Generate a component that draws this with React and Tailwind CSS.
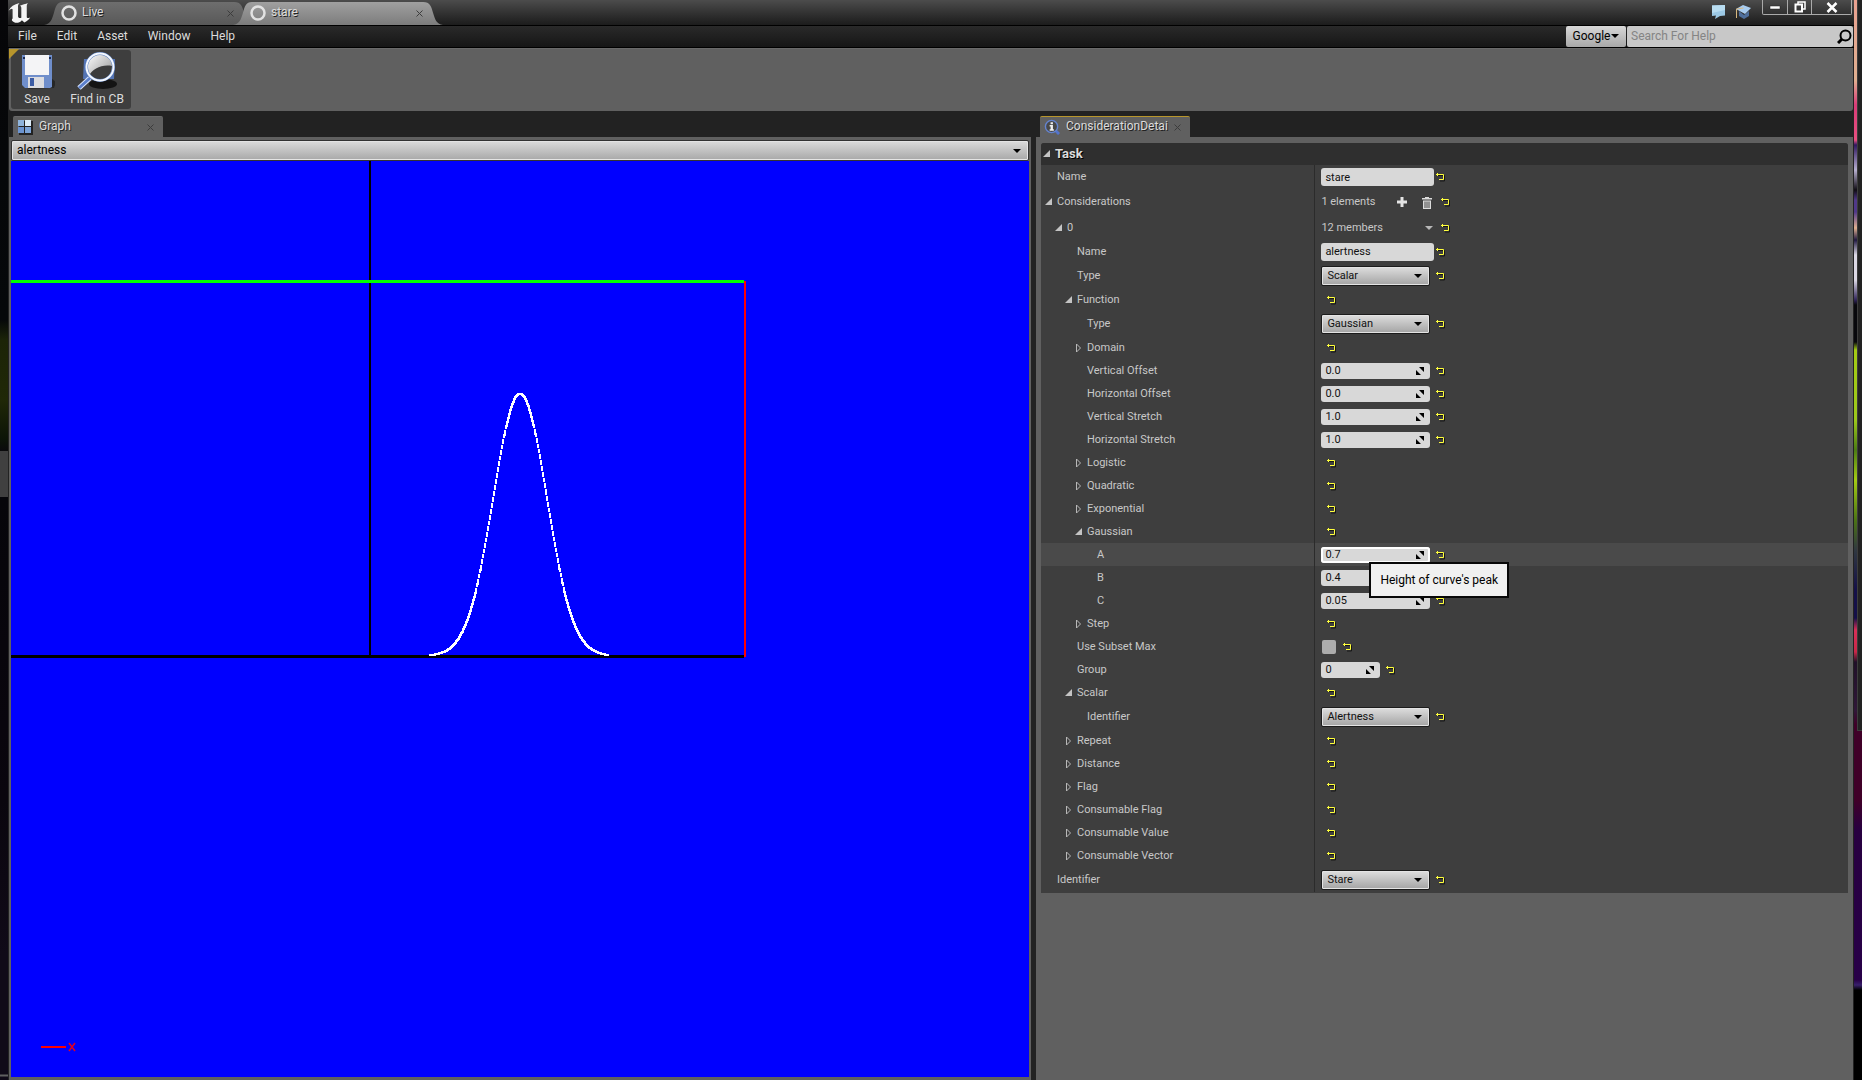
const GRAPH = { left: 359, base: 495, scale: 374, a: 0.7, b: 0.4, c: 0.05 };

function curveY(x) {
  const d = (x - GRAPH.left) / GRAPH.scale - GRAPH.b;
  return GRAPH.base - GRAPH.a * (GRAPH.scale + 1) * Math.exp(-(d * d) / (4 * GRAPH.c * GRAPH.c));
}

function curveSegments() {
  const out = [];
  for (let x = 418; x < 597; x += 1) {
    const y0 = Math.round(curveY(x));
    const y1 = Math.round(curveY(x + 1));
    const rise = Math.abs(y1 - y0);
    out.push({ x, y: Math.min(y0, y1) - 1, h: rise < 5 ? rise + 2 : rise - 1 });
  }
  return out;
}

function Graph() {
  return (
    <svg className="block w-full h-full" shapeRendering="crispEdges" role="img" aria-label="Response curve">
      <rect x="358" y="0" width="2" height="495" fill="#000" />
      <rect x="0" y="494" width="733" height="3" fill="#000" />
      <rect x="0" y="119" width="733" height="3" fill="#00ff00" />
      <rect x="733" y="120" width="2" height="376" fill="#f00" />
      {curveSegments().map((s) => (
        <rect key={s.x} x={s.x} y={s.y} width="2" height={s.h} fill="#fff" />
      ))}
      <rect x="30" y="885" width="25" height="2" fill="#f00" />
      <path d="M58 882l6 8M64 882l-6 8" stroke="#e00020" strokeWidth="1.5" shapeRendering="auto" />
    </svg>
  );
}

function Reset() {
  return (
    <button type="button" aria-label="Reset to default" className="shrink-0 w-3 h-3">
      <svg className="block" width="12" height="12" viewBox="0 0 12 12" fill="none">
        <path d="M3 4.500h6.500v5.500H5" stroke="#161616" />
        <path d="M1 3.500h7.500v5H4M2.500 2v3" stroke="#ffff3c" />
      </svg>
    </button>
  );
}

function Arrow({ open }) {
  return (
    <button type="button" aria-label={open ? "Collapse" : "Expand"} className="shrink-0 w-3 h-3">
      {open ? (
        <svg className="block" width="12" height="12" viewBox="0 0 12 12"><path d="M0 9h7V2z" fill="#c4c4c4" /></svg>
      ) : (
        <svg className="block" width="12" height="12" viewBox="0 0 12 12" fill="none"><path d="M1.500 2v8l4-4z" stroke="#b8b8b8" /></svg>
      )}
    </button>
  );
}

function Caret({ className }) {
  return (
    <svg className={className} width="8" height="4" viewBox="0 0 8 4"><path d="M0 0h8L4 4z" fill="currentColor" /></svg>
  );
}

function TextField({ label, value }) {
  return (
    <input type="text" aria-label={label} defaultValue={value} className="w-[113px] h-[18px] rounded-[3px] bg-[#d8d8d8] px-1 text-[11px] text-[#111] outline-none" />
  );
}

function Combo({ label, value }) {
  return (
    <span className="relative flex items-center">
      <select aria-label={label} className="appearance-none w-[109px] h-5 rounded-[2px] border border-[#1c1c1c] bg-linear-to-b from-[#dedede] to-[#a4a4a4] px-[5px] text-[11px] text-[#111] shadow-[inset_0_0_0_1px_#e4e4e4] outline-none">
        <option>{value}</option>
      </select>
      <Caret className="absolute right-2 pointer-events-none text-black" />
    </span>
  );
}

function NumberField({ label, value, small, focused }) {
  return (
    <span className="relative flex items-center">
      <input
        type="text"
        inputMode="decimal"
        aria-label={label}
        defaultValue={value}
        className={`${small ? "w-[59px]" : "w-[109px]"} ${focused ? "shadow-[inset_0_0_0_2px_#ffffff]" : ""} h-4 rounded-[3px] bg-[#d8d8d8] px-1 text-[11px] text-[#111] outline-none`}
      />
      <svg className="absolute right-[6px] pointer-events-none" width="8" height="8" viewBox="0 0 8 8"><path d="M3 0h5v5zM0 3v5h5z" fill="#000" /></svg>
    </span>
  );
}

const ROWS = [
  { label: "Name", depth: 0, h: "h-6", kind: "text", value: "stare" },
  { label: "Considerations", depth: 0, h: "h-[26px]", open: true, kind: "array", value: "1 elements" },
  { label: "0", depth: 1, h: "h-[25px]", open: true, kind: "members", value: "12 members" },
  { label: "Name", depth: 2, kind: "text", value: "alertness" },
  { label: "Type", depth: 2, h: "h-[25px]", kind: "combo", value: "Scalar" },
  { label: "Function", depth: 2, open: true },
  { label: "Type", depth: 3, h: "h-[25px]", kind: "combo", value: "Gaussian" },
  { label: "Domain", depth: 3, open: false },
  { label: "Vertical Offset", depth: 3, kind: "number", value: "0.0" },
  { label: "Horizontal Offset", depth: 3, kind: "number", value: "0.0" },
  { label: "Vertical Stretch", depth: 3, kind: "number", value: "1.0" },
  { label: "Horizontal Stretch", depth: 3, kind: "number", value: "1.0" },
  { label: "Logistic", depth: 3, open: false },
  { label: "Quadratic", depth: 3, open: false },
  { label: "Exponential", depth: 3, open: false },
  { label: "Gaussian", depth: 3, open: true },
  { label: "A", depth: 4, kind: "number", value: "0.7", focused: true, tip: "Height of curve's peak" },
  { label: "B", depth: 4, kind: "number", value: "0.4" },
  { label: "C", depth: 4, kind: "number", value: "0.05" },
  { label: "Step", depth: 3, open: false },
  { label: "Use Subset Max", depth: 2, kind: "check" },
  { label: "Group", depth: 2, kind: "number", value: "0", small: true },
  { label: "Scalar", depth: 2, open: true },
  { label: "Identifier", depth: 3, h: "h-[25px]", kind: "combo", value: "Alertness" },
  { label: "Repeat", depth: 2, open: false },
  { label: "Distance", depth: 2, open: false },
  { label: "Flag", depth: 2, open: false },
  { label: "Consumable Flag", depth: 2, open: false },
  { label: "Consumable Value", depth: 2, open: false },
  { label: "Consumable Vector", depth: 2, open: false },
  { label: "Identifier", depth: 0, h: "h-[25px]", kind: "combo", value: "Stare" },
];

const INDENT = ["pl-1", "pl-[14px]", "pl-6", "pl-[34px]", "pl-11"];

function Value({ row }) {
  if (row.kind === "text") return <div className="flex items-center gap-px"><TextField label={row.label} value={row.value} /><Reset /></div>;
  if (row.kind === "combo") return <div className="flex items-center gap-[5px]"><Combo label={row.label} value={row.value} /><Reset /></div>;
  if (row.kind === "number") return <div className="flex items-center gap-[5px]"><NumberField label={row.label} value={row.value} small={row.small} focused={row.focused} /><Reset /></div>;
  if (row.kind === "check")
    return (
      <div className="flex items-center gap-[6px] pl-px">
        <input type="checkbox" aria-label={row.label} className="appearance-none w-[14px] h-[14px] rounded-[2px] bg-[#acacac]" />
        <Reset />
      </div>
    );
  if (row.kind === "array")
    return (
      <div className="flex items-center">
        <span className="w-[75px]">{row.value}</span>
        <button type="button" aria-label="Add element" className="w-[25px]">
          <svg className="block" width="12" height="12" viewBox="0 0 12 12"><path d="M4.500 1h3v3.500H11v3H7.500V11h-3V7.500H1v-3h3.500z" fill="#e4e4e4" /></svg>
        </button>
        <button type="button" aria-label="Remove all elements" className="w-[19px]">
          <svg className="block" width="12" height="13" viewBox="0 0 12 13"><path d="M1 2h3V1h4v1h3v1.500H1zM2 4.500h8V13H2z" fill="#dcdcdc" /><path d="M4 5.500V12M6 5.500V12M8 5.500V12" stroke="#444" /></svg>
        </button>
        <Reset />
      </div>
    );
  if (row.kind === "members")
    return (
      <div className="flex items-center">
        <span className="w-[104px]">{row.value}</span>
        <button type="button" aria-label="Element options" className="w-[15px]"><Caret className="block text-[#b8b8b8]" /></button>
        <Reset />
      </div>
    );
  return <div className="flex items-center pl-[5px]"><Reset /></div>;
}

function Row({ row }) {
  const expandable = row.open !== undefined;
  return (
    <div className={`${row.h || "h-[23px]"} ${row.focused ? "bg-[#4a4a4a]" : ""} relative flex text-[11px] leading-4 text-[#c8c8c8]`}>
      <div className={`${INDENT[row.depth]} w-[34%] shrink-0 flex items-center border-r border-[#2b2b2b]`}>
        {expandable ? <Arrow open={row.open} /> : <span className="w-3 shrink-0" />}
        <span>{row.label}</span>
      </div>
      <div className="flex items-center pl-[6px]"><Value row={row} /></div>
      {row.tip && (
        <div role="tooltip" className="absolute z-10 left-[34%] ml-[54px] top-[19px] border-2 border-[#080808] bg-[#f0f0f0] px-[9px] py-2 text-[12px] leading-4 text-black whitespace-nowrap">
          {row.tip}
        </div>
      )}
    </div>
  );
}

function Unreal() {
  return (
    <svg className="shrink-0" width="23" height="21" viewBox="0 0 19 19" preserveAspectRatio="none">
      <path d="M0.500 8C2 4.500 5 2 9.500 1C8 2.500 8.300 3.500 8.300 5v8c0 1.500 1.500 2 2.700 1.200V5.500C11 4.200 10.500 3.700 9.800 3.400C12 2.500 14.500 1.800 16.500 1C15.700 2 15.500 3 15.500 4v9.500c0 1 1.200 1.600 2.800.3C17.500 16 15.500 17.500 13.500 18.500L11.500 16.500C10 18.500 8 19 6 18.700C3.500 18.200 2.500 16 3.800 15V7C3.800 5.500 2 6.300 0.500 8z" fill="#f4f4f4" />
    </svg>
  );
}

function DocTab({ label, active }) {
  return (
    <div className={`${active ? "-ml-[21px] z-10" : ""} relative w-[210px] h-6 shrink-0`}>
      <svg className="absolute inset-0 w-full h-full" viewBox="0 0 212 24" preserveAspectRatio="none">
        <defs>
          <linearGradient id={active ? "tabOn" : "tabOff"} x1="0" y1="0" x2="0" y2="1">
            <stop offset="0" stopColor={active ? "#a0a0a0" : "#6e6e6e"} />
            <stop offset="1" stopColor={active ? "#7c7c7c" : "#585858"} />
          </linearGradient>
        </defs>
        <path d="M0 24C7 23 8 18 10 12C12 5 13 1 19 1H192C199 1 200 5 202 12C204 18 205 23 212 24z" fill={active ? "url(#tabOn)" : "url(#tabOff)"} />
      </svg>
      <div className="relative flex items-center h-full pl-4 pr-5">
        <svg width="18" height="18" viewBox="0 0 18 18"><circle cx="9" cy="9" r="6.500" fill="none" stroke="#e2e2e2" strokeWidth="2.500" /></svg>
        <button type="button" className="flex-1 pl-1 pb-[2px] text-left text-[12px] text-[#dcdcdc] [text-shadow:1px_1px_0_#222]">{label}</button>
        <Close />
      </div>
    </div>
  );
}

function Close() {
  return (
    <button type="button" aria-label="Close tab" className="shrink-0">
      <svg className="block" width="7" height="7" viewBox="0 0 7 7"><path d="M0.500.500l6 6M6.500.500l-6 6" stroke="#3c3c3c" /></svg>
    </button>
  );
}

function TitleBar() {
  return (
    <header className="flex h-[25px] bg-linear-to-b from-[#4c4c4c] to-[#1c1c1c]">
      <div className="w-9 pt-[2px]"><Unreal /></div>
      <div className="flex items-end"><DocTab label="Live" /><DocTab label="stare" active /></div>
      <div className="ml-auto flex items-start">
        <svg className="mt-1 mr-[9px]" width="15" height="16" viewBox="0 0 15 16"><path d="M1 1.500L14 1v10.500l-5 .5-5 3 1-3.500-4 .5z" fill="#9cc8e4" /><path d="M1 1.500L14 1v5L1 9z" fill="#b8dcf0" /></svg>
        <svg className="mt-1 mr-[10px]" width="17" height="16" viewBox="0 0 17 16"><path d="M4 7l5 4 5-4v5l-5 3-5-3z" fill="#4f6f9c" /><path d="M1 5l7-4 8 3-6 6z" fill="#a8ccf0" /><path d="M1.500 5v9M1.500 5l7-1" stroke="#d8b880" fill="none" /></svg>
        <div className="flex h-[15px] border border-t-0 border-[#aaa] rounded-b-[2px] mr-[2px]">
          <button type="button" aria-label="Minimize" className="w-[25px] flex items-center justify-center border-r border-[#aaa]"><svg width="12" height="5" viewBox="0 0 12 5"><path d="M1 1h10v3H1z" fill="#fff" stroke="#222" strokeWidth="0.500" /></svg></button>
          <button type="button" aria-label="Restore" className="w-6 flex items-center justify-center border-r border-[#aaa]"><svg width="12" height="12" viewBox="0 0 12 12" fill="none" stroke="#fff" strokeWidth="1.500"><path d="M4 3V1h7v7H9" /><path d="M1.500 3.500h6.500v7H1.500z" strokeWidth="2" /></svg></button>
          <button type="button" aria-label="Close" className="w-[39px] flex items-center justify-center"><svg width="12" height="11" viewBox="0 0 12 11"><path d="M1.500 1l9 9M10.500 1l-9 9" stroke="#fff" strokeWidth="2.500" /></svg></button>
        </div>
      </div>
    </header>
  );
}

function MenuBar() {
  return (
    <nav className="flex items-stretch h-[23px] border-y border-black bg-linear-to-b from-[#2a2a2a] to-[#161616] text-[12px] text-[#dcdcdc]">
      <div className="flex items-center gap-5 pl-[10px] pb-[2px]">
        {["File", "Edit", "Asset", "Window", "Help"].map((m) => <button type="button" key={m}>{m}</button>)}
      </div>
      <button type="button" className="ml-auto w-[60px] mr-px pb-[2px] flex items-center justify-center gap-px rounded-[2px] bg-linear-to-b from-[#d8d8d8] to-[#a8a8a8] text-black">
        Google<Caret />
      </button>
      <div className="relative w-[226px] mr-px">
        <input type="search" aria-label="Search For Help" placeholder="Search For Help" className="w-full h-full rounded-[2px] bg-[#c8c8c8] pl-1 pr-5 pb-[2px] text-[12px] text-black placeholder:text-[#848484] outline-none" />
        <svg className="absolute right-px top-[3px]" width="15" height="15" viewBox="0 0 15 15" fill="none" stroke="#000"><circle cx="8.500" cy="6.500" r="5" strokeWidth="2" /><path d="M5 10l-4 4" strokeWidth="3" /></svg>
      </div>
    </nav>
  );
}

function SaveIcon() {
  return (
    <svg width="36" height="36" viewBox="0 0 36 36">
      <path d="M8 35l27-1 2-6-5-4z" fill="#1c1c1c" opacity=".7" />
      <path d="M3 1h30v32l-2 1H6l-3-3z" fill="#6f8ecb" />
      <path d="M6 1h24v20H6z" fill="#f4f4f6" />
      <path d="M9 23h16v11H9z" fill="#dcdce0" /><path d="M11 24h4v8h-4z" fill="#3c5ca4" />
      <path d="M4 3h2v2H4zM30 3h2v2h-2z" fill="#1c2c54" />
    </svg>
  );
}

function FindIcon() {
  return (
    <svg width="42" height="38" viewBox="0 0 42 38">
      <defs><linearGradient id="lens" x1="0" y1="0" x2="1" y2="1"><stop offset="0" stopColor="#fff" /><stop offset="1" stopColor="#8c8c8c" /></linearGradient></defs>
      <ellipse cx="27" cy="32" rx="14" ry="5" fill="#141414" />
      <path d="M8 7h31l-1 20H7z" fill="#5474b4" />
      <path d="M14 26L3 36" stroke="#dce8ff" strokeWidth="5" /><path d="M14 26L3 36" stroke="#5c80cc" strokeWidth="3" />
      <circle cx="24" cy="15" r="13" fill="url(#lens)" />
      <path d="M13 24C16 17 26 12 36 14C36 24 28 29 22 28C18 28 15 26 13 24z" fill="#3c3c3c" />
      <circle cx="24" cy="15" r="13.500" fill="none" stroke="#5c80c0" strokeWidth="3" /><circle cx="24" cy="15" r="13.500" fill="none" stroke="#f4f8ff" strokeWidth="2" />
    </svg>
  );
}

function Toolbar() {
  return (
    <div className="relative h-[63px] border-t border-[#6a6a6a] rounded-b-[3px] bg-[#606060] mx-px px-[2px] pt-px">
      <svg className="absolute left-0 top-0 z-10" width="10" height="10" viewBox="0 0 10 10"><path d="M0 0h10L0 10z" fill="#b8962c" /></svg>
      <div className="inline-flex h-[59px] rounded-[3px] bg-[#3e3e3e] text-[12px] leading-4 text-[#dcdcdc] [text-shadow:1px_1px_0_#111]">
        <button type="button" className="w-[52px] flex flex-col items-center justify-between pt-1 pb-[2px]"><SaveIcon />Save</button>
        <button type="button" className="w-[68px] flex flex-col items-center justify-between pt-[2px] pb-[2px]"><FindIcon />Find in CB</button>
      </div>
    </div>
  );
}

function PanelTab({ label, icon, accent }) {
  return (
    <div className={`${accent ? "border-[#b8962c]" : "border-[#6a6a6a]"} w-[150px] h-[21px] border-t rounded-t-[2px] bg-[#606060] flex items-center pl-1 pr-[9px]`}>
      {icon}
      <button type="button" className="flex-1 min-w-0 overflow-hidden whitespace-nowrap pl-[6px] pb-[2px] text-left text-[12px] leading-4 text-[#dcdcdc] [text-shadow:1px_1px_0_#222]">{label}</button>
      <Close />
    </div>
  );
}

const GridIcon = (
  <svg className="shrink-0" width="16" height="16" viewBox="0 0 16 16"><path d="M2 2h14v14H2z" fill="#222" /><path d="M1 1h6v6H1z" fill="#8fb4dc" /><path d="M8 1h6v6H8z" fill="#dcecf8" /><path d="M1 8h6v6H1z" fill="#6c94d0" /><path d="M8 8h6v6H8z" fill="#7ca4d8" /></svg>
);

const InfoIcon = (
  <svg className="shrink-0" width="16" height="16" viewBox="0 0 17 17"><path d="M12 12l4 4" stroke="#5474cc" strokeWidth="3" /><circle cx="8" cy="8" r="6.500" fill="#484848" stroke="#6484d0" strokeWidth="1.500" /><path d="M7 3.500h2.500v2H7zM6 6.500h3.500v4.500h1v1.500H6V11h1V8H6z" fill="#f0f0f0" /></svg>
);

function LeftBackdrop() {
  return (
    <aside aria-hidden="true" className="w-2 shrink-0 bg-[linear-gradient(to_bottom,#060608_0px,#06080a_320px,#1c2408_340px,#202808_400px,#0c1408_440px,#0a0a0c_451px,#404040_451px,#404040_497px,#06060a_497px,#0a060e_800px,#100a18_955px,#100a18_1074px,#606060_1075px,#606060_1076px,#100a18_1077px)]" />
  );
}

function RightBackdrop() {
  return (
    <aside aria-hidden="true" className="w-2 shrink-0 bg-[linear-gradient(to_bottom,#e8a090_0px,#e0b090_80px,#d83c78_105px,#e85080_140px,#301860_145px,#b8b0d0_170px,#100c14_190px,#503888_200px,#503888_212px,#e0b090_228px,#201840_240px,#dcd8e4_255px,#dcd8e4_280px,#302458_300px,#08080c_305px,#08080c_342px,#a4cc14_350px,#9cc81c_420px,#4c7c14_450px,#a4cc14_480px,#4c7414_520px,#303840_550px,#141048_590px,#141048_618px,#d83058_630px,#c82848_652px,#201028_662px,#301838_710px,#400028_725px,#400028_800px,#280040_830px,#280048_980px,#38206c_985px,#000_990px)]">
      <div className="ml-auto w-[5px] h-[731px] bg-[#222] border-l border-b border-[#3c3c3c]" />
    </aside>
  );
}

export default function App() {
  return (
    <div className="flex h-screen overflow-hidden bg-[#0a0a0c] font-['Roboto',sans-serif]">
      <LeftBackdrop />
      <main className="flex-1 min-w-0 flex flex-col bg-[#222]">
        <TitleBar />
        <MenuBar />
        <Toolbar />
        <div className="flex-1 min-h-0 flex gap-[5px] px-px pt-[5px]">
          <section className="w-[1022px] min-w-0 shrink flex flex-col">
            <div className="pl-1"><PanelTab label="Graph" icon={GridIcon} /></div>
            <div className="flex-1 min-h-0 flex flex-col bg-[#606060] px-[2px] pt-[3px] pb-[3px]">
              <div className="relative flex items-center">
                <select aria-label="Consideration" className="appearance-none w-full h-[21px] rounded-[2px] border border-[#333] bg-linear-to-b from-[#dcdcdc] to-[#a8a8a8] pl-[5px] pb-[2px] text-[12px] text-black shadow-[inset_0_0_0_1px_#e4e4e4] outline-none"><option>alertness</option></select>
                <Caret className="absolute right-2 pointer-events-none text-black" />
              </div>
              <div className="flex-1 min-h-0 bg-[#0000ff]"><Graph /></div>
            </div>
          </section>
          <section className="flex-1 min-w-0 flex flex-col">
            <div className="pl-1"><PanelTab label="ConsiderationDetai" icon={InfoIcon} accent /></div>
            <div className="flex-1 min-h-0 bg-[#606060] px-[5px] pt-[6px]">
              <div className="rounded-t-[3px] bg-[#3e3e3e] pb-px">
                <h2 className="h-[22px] flex items-center rounded-t-[3px] bg-[#2f2f2f] pl-[2px] text-[13px] font-bold text-[#dcdcdc] [text-shadow:1px_1px_0_#000]"><Arrow open />Task</h2>
                {ROWS.map((row, i) => <Row key={i} row={row} />)}
              </div>
            </div>
          </section>
        </div>
      </main>
      <RightBackdrop />
    </div>
  );
}
